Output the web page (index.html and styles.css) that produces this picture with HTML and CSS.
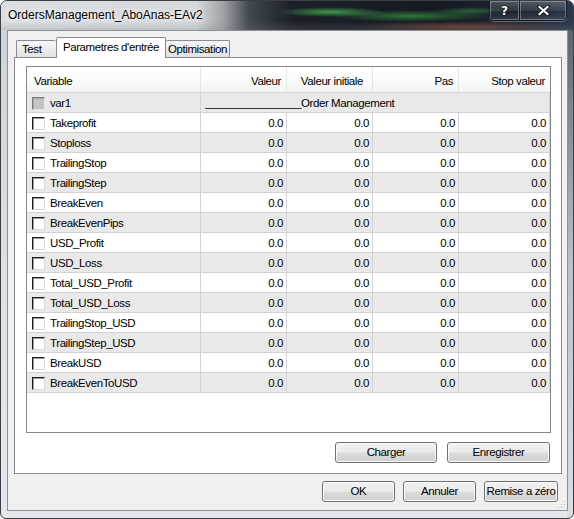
FILE: index.html
```html
<!DOCTYPE html>
<html>
<head>
<meta charset="utf-8">
<link rel="stylesheet" href="styles.css">
</head>
<body>
<div class="window">
  <div class="titlebar">
    <div class="title">OrdersManagement_AboAnas-EAv2</div>
    <div class="cap-group">
      <div class="cap help">?</div>
      <div class="cap close">
        <svg width="13" height="11" viewBox="0 0 13 11"><path d="M2 1.5 L11 9.5 M11 1.5 L2 9.5" stroke="#1a2230" stroke-width="4" stroke-linecap="round" fill="none"/><path d="M2.5 2 L10.5 9 M10.5 2 L2.5 9" stroke="#fff" stroke-width="2" stroke-linecap="square" fill="none"/></svg>
      </div>
    </div>
  </div>
  <div class="client">
    <div class="tabs">
      <div class="tab tab-test">Test</div>
      <div class="tab active">Parametres d'entrée</div>
      <div class="tab tab-opt">Optimisation</div>
    </div>
    <div class="panel">
      <div class="listbox">
        <div class="grid header">
          <div class="hcell hleft">Variable</div>
          <div class="hcell">Valeur</div>
          <div class="hcell hinit">Valeur initiale</div>
          <div class="hcell">Pas</div>
          <div class="hcell">Stop valeur</div>
        </div>
        <div class="grid row alt">
          <div class="cell var"><span class="chk disabled"></span>var1</div>
          <div class="cell span">________________Order Management</div>
        </div>
        <div class="grid row">
          <div class="cell var"><span class="chk"></span>Takeprofit</div>
          <div class="cell num">0.0</div><div class="cell num">0.0</div><div class="cell num">0.0</div><div class="cell num">0.0</div>
        </div>
        <div class="grid row alt">
          <div class="cell var"><span class="chk"></span>Stoploss</div>
          <div class="cell num">0.0</div><div class="cell num">0.0</div><div class="cell num">0.0</div><div class="cell num">0.0</div>
        </div>
        <div class="grid row">
          <div class="cell var"><span class="chk"></span>TrailingStop</div>
          <div class="cell num">0.0</div><div class="cell num">0.0</div><div class="cell num">0.0</div><div class="cell num">0.0</div>
        </div>
        <div class="grid row alt">
          <div class="cell var"><span class="chk"></span>TrailingStep</div>
          <div class="cell num">0.0</div><div class="cell num">0.0</div><div class="cell num">0.0</div><div class="cell num">0.0</div>
        </div>
        <div class="grid row">
          <div class="cell var"><span class="chk"></span>BreakEven</div>
          <div class="cell num">0.0</div><div class="cell num">0.0</div><div class="cell num">0.0</div><div class="cell num">0.0</div>
        </div>
        <div class="grid row alt">
          <div class="cell var"><span class="chk"></span>BreakEvenPips</div>
          <div class="cell num">0.0</div><div class="cell num">0.0</div><div class="cell num">0.0</div><div class="cell num">0.0</div>
        </div>
        <div class="grid row">
          <div class="cell var"><span class="chk"></span>USD_Profit</div>
          <div class="cell num">0.0</div><div class="cell num">0.0</div><div class="cell num">0.0</div><div class="cell num">0.0</div>
        </div>
        <div class="grid row alt">
          <div class="cell var"><span class="chk"></span>USD_Loss</div>
          <div class="cell num">0.0</div><div class="cell num">0.0</div><div class="cell num">0.0</div><div class="cell num">0.0</div>
        </div>
        <div class="grid row">
          <div class="cell var"><span class="chk"></span>Total_USD_Profit</div>
          <div class="cell num">0.0</div><div class="cell num">0.0</div><div class="cell num">0.0</div><div class="cell num">0.0</div>
        </div>
        <div class="grid row alt">
          <div class="cell var"><span class="chk"></span>Total_USD_Loss</div>
          <div class="cell num">0.0</div><div class="cell num">0.0</div><div class="cell num">0.0</div><div class="cell num">0.0</div>
        </div>
        <div class="grid row">
          <div class="cell var"><span class="chk"></span>TrailingStop_USD</div>
          <div class="cell num">0.0</div><div class="cell num">0.0</div><div class="cell num">0.0</div><div class="cell num">0.0</div>
        </div>
        <div class="grid row alt">
          <div class="cell var"><span class="chk"></span>TrailingStep_USD</div>
          <div class="cell num">0.0</div><div class="cell num">0.0</div><div class="cell num">0.0</div><div class="cell num">0.0</div>
        </div>
        <div class="grid row">
          <div class="cell var"><span class="chk"></span>BreakUSD</div>
          <div class="cell num">0.0</div><div class="cell num">0.0</div><div class="cell num">0.0</div><div class="cell num">0.0</div>
        </div>
        <div class="grid row alt">
          <div class="cell var"><span class="chk"></span>BreakEvenToUSD</div>
          <div class="cell num">0.0</div><div class="cell num">0.0</div><div class="cell num">0.0</div><div class="cell num">0.0</div>
        </div>
      </div>
      <div class="btnrow panel-btns">
        <button class="btn b-load">Charger</button>
        <button class="btn b-save">Enregistrer</button>
      </div>
    </div>
    <div class="btnrow dialog-btns">
      <button class="btn b-small">OK</button>
      <button class="btn b-small">Annuler</button>
      <button class="btn b-reset">Remise a zéro</button>
    </div>
    <svg class="grip" width="8" height="8" viewBox="0 0 8 8">
      <rect x="6" y="0" width="1" height="1" fill="#b8bcc0"/>
      <rect x="3" y="3" width="1" height="1" fill="#b8bcc0"/>
      <rect x="6" y="3" width="1" height="1" fill="#b8bcc0"/>
      <rect x="0" y="6" width="1" height="1" fill="#b8bcc0"/>
      <rect x="3" y="6" width="1" height="1" fill="#b8bcc0"/>
      <rect x="6" y="6" width="1" height="1" fill="#b8bcc0"/>
    </svg>
  </div>
</div>
</body>
</html>
```

FILE: styles.css
```css
html, body {
  margin: 0;
  padding: 0;
}
body {
  width: 574px;
  height: 519px;
  overflow: hidden;
  background: #ffffff;
  font-family: "Liberation Sans", Arial, sans-serif;
}
.window {
  box-sizing: border-box;
  width: 574px;
  height: 519px;
  border: 1px solid #3a3f46;
  border-radius: 7px 7px 6px 6px;
  overflow: hidden;
  display: flex;
  flex-direction: column;
  background:
    linear-gradient(180deg, #50565d 0%, #7d838a 20%, #b9c0c6 50%, #d9dee3 100%) right top / 6px 100% no-repeat,
    linear-gradient(180deg, #cdd2d7 0%, #dfe3e7 60%, #e4e8ec 100%);
}
.titlebar {
  height: 29px;
  flex: none;
  display: flex;
  justify-content: space-between;
  align-items: flex-start;
  background:
    radial-gradient(55px 5px at 330px 11px, rgba(70, 175, 80, 0.85), rgba(70, 175, 80, 0)),
    radial-gradient(80px 6px at 410px 15px, rgba(55, 150, 65, 0.75), rgba(55, 150, 65, 0)),
    radial-gradient(40px 4px at 470px 10px, rgba(60, 140, 70, 0.6), rgba(60, 140, 70, 0)),
    radial-gradient(110px 6px at 460px 26px, rgba(150, 85, 65, 0.6), rgba(150, 85, 65, 0)),
    linear-gradient(180deg, rgba(0, 0, 0, 0) 70%, rgba(120, 125, 130, 0.25) 100%),
    linear-gradient(90deg, #dcdfe2 0px, #d6d9dc 195px, #9fa4a9 222px, #424850 248px, #1b2029 290px, #141922 440px, #1f2835 520px, #2b384b 572px);
}
.title {
  padding: 6px 0 0 7px;
  font-size: 12px;
  line-height: 16px;
  color: #000;
  text-shadow: 0 0 6px rgba(255, 255, 255, 0.9), 0 0 3px rgba(255, 255, 255, 0.8);
}
.cap-group {
  display: flex;
  height: 20px;
  box-sizing: border-box;
  margin-right: 6px;
  border: 1px solid rgba(15, 20, 30, 0.85);
  border-top: none;
  border-radius: 0 0 5px 5px;
  overflow: hidden;
  box-shadow: 0 1px 0 rgba(255, 255, 255, 0.3);
}
.cap {
  height: 100%;
  display: flex;
  align-items: center;
  justify-content: center;
  box-shadow: inset 0 0 0 1px rgba(255, 255, 255, 0.3);
  background: linear-gradient(180deg, rgba(255, 255, 255, 0.22) 0%, rgba(255, 255, 255, 0.08) 50%, rgba(0, 0, 0, 0.12) 51%, rgba(255, 255, 255, 0.1) 100%);
}
.help {
  width: 29px;
  border-right: 1px solid rgba(15, 20, 30, 0.85);
  color: #fff;
  font-family: "DejaVu Sans", sans-serif;
  font-weight: bold;
  font-size: 12px;
  line-height: 12px;
  text-shadow: 0 0 2px #000, 0 0 1px #000;
}
.close {
  width: 46px;
}
.client {
  position: relative;
  box-sizing: border-box;
  height: 481px;
  margin: 0 5px 7px 6px;
  border: 1px solid #8c9197;
  background: #f0f0f0;
  display: flex;
  flex-direction: column;
}
.tabs {
  position: relative;
  z-index: 1;
  display: flex;
  align-items: flex-end;
  height: 21px;
  margin: 6px 0 0 8px;
  font-size: 11.5px;
  letter-spacing: -0.4px;
}
.tab {
  box-sizing: border-box;
  height: 17px;
  margin-bottom: 1px;
  border: 1px solid #898c95;
  border-bottom: none;
  border-radius: 2px 2px 0 0;
  background: linear-gradient(180deg, #f6f6f6 0%, #ececec 50%, #e1e1e1 100%);
  padding-top: 2px;
  line-height: 13px;
  text-align: center;
  color: #000;
  white-space: nowrap;
}
.tab-test {
  width: 40px;
  text-align: left;
  padding-left: 5px;
  border-right: none;
}
.tab.active {
  width: 110px;
  height: 21px;
  margin-bottom: 0;
  padding-top: 3px;
  background: #ffffff;
}
.tab-opt {
  width: 64px;
  border-left: none;
}
.panel {
  box-sizing: border-box;
  height: 417px;
  margin: -1px 5px 0 6px;
  border: 1px solid #898c95;
  background: #ffffff;
  padding-top: 8px;
  display: flex;
  flex-direction: column;
}
.listbox {
  box-sizing: border-box;
  width: 525px;
  height: 367px;
  margin-left: 11px;
  border: 1px solid #828790;
  background: #ffffff;
  overflow: hidden;
  font-size: 11.5px;
  letter-spacing: -0.4px;
  color: #000;
}
.grid {
  display: grid;
  grid-template-columns: 174px 86px 86px 86px 91px;
}
.header {
  box-sizing: border-box;
  height: 26px;
  border-bottom: 1px solid #d5d5d5;
  background: linear-gradient(180deg, #ffffff 0%, #fbfbfb 50%, #f3f4f5 100%);
}
.hcell {
  box-sizing: border-box;
  border-right: 1px solid #e4e5e7;
  padding: 8px 5px 0 0;
  line-height: 13px;
  text-align: right;
  white-space: nowrap;
}
.hcell:last-child {
  border-right: none;
}
.hleft {
  text-align: left;
  padding-left: 7px;
}
.hinit {
  padding-right: 9px;
}
.row {
  box-sizing: border-box;
  height: 20px;
  border-bottom: 1px solid #d2d2d2;
  background: #ffffff;
}
.row.alt {
  background: #e9e9e9;
}
.cell {
  box-sizing: border-box;
  height: 19px;
  border-right: 1px solid #d2d2d2;
  padding-top: 4px;
  line-height: 13px;
  white-space: nowrap;
  overflow: hidden;
}
.var {
  padding-left: 5px;
}
.num {
  text-align: right;
  padding-right: 3px;
}
.span {
  grid-column: 2 / 6;
  padding-left: 4px;
}
.chk {
  display: inline-block;
  vertical-align: top;
  box-sizing: border-box;
  width: 13px;
  height: 13px;
  margin-right: 5px;
  border: 1px solid;
  border-color: #1c1c1c #d8d8d8 #d8d8d8 #1c1c1c;
  background: #ffffff;
  box-shadow: inset 1px 1px 0 #9a9a9a;
}
.chk.disabled {
  border-color: #7a7a7a #e4e4e4 #e4e4e4 #7a7a7a;
  background: #c4c4c4;
  box-shadow: inset 1px 1px 0 #a8a8a8;
}
.btnrow {
  display: flex;
  justify-content: flex-end;
}
.panel-btns {
  margin-top: 9px;
  padding-right: 11px;
  gap: 10px;
}
.dialog-btns {
  margin-top: 7px;
  padding-right: 9px;
  gap: 8px;
}
.btn {
  box-sizing: border-box;
  height: 21px;
  margin: 0;
  padding: 0;
  border: 1px solid #707070;
  border-radius: 3px;
  background: linear-gradient(180deg, #f2f2f2 0%, #ebebeb 48%, #dddddd 52%, #cfcfcf 100%);
  box-shadow: inset 0 0 0 1px #fbfbfb;
  font-family: "Liberation Sans", Arial, sans-serif;
  font-size: 11.5px;
  letter-spacing: -0.4px;
  line-height: 17px;
  color: #000;
  text-align: center;
  white-space: nowrap;
}
.b-load {
  width: 102px;
}
.b-save {
  width: 103px;
}
.b-small {
  width: 73px;
}
.b-reset {
  width: 74px;
}
.grip {
  position: absolute;
  right: 1px;
  bottom: 1px;
}
```
